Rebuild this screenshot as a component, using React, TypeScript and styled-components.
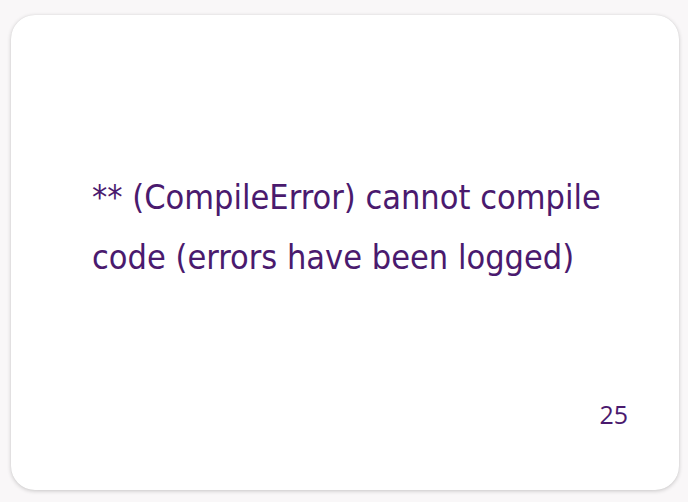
import React from "react";
import styled, { createGlobalStyle } from "styled-components";

const Global = createGlobalStyle`
  html, body { margin: 0; padding: 0; background: #f9f7f8; }
  body { width: 688px; height: 502px; overflow: hidden; }
`;

const Page = styled.div`
  box-sizing: border-box;
  width: 688px;
  height: 502px;
  padding: 15px 9px 12px 11px;
  display: flex;
`;

const Card = styled.section`
  flex: 1;
  box-sizing: border-box;
  background: #ffffff;
  border-radius: 24px;
  box-shadow: 0 1px 4px rgba(0, 0, 0, 0.2), 0 0 1px rgba(0, 0, 0, 0.08);
  display: grid;
  grid-template-rows: 1fr auto;
  padding: 0 51px 60px 81px;
`;

const Message = styled.p`
  margin: 0;
  align-self: center;
  font-family: "DejaVu Sans", "Noto Sans", sans-serif;
  font-stretch: condensed;
  font-size: 34px;
  line-height: 60px;
  color: #4a1a6e;
  padding-top: 40px;
  padding-right: 4px;
`;

const Footer = styled.div`
  justify-self: end;
  font-family: "Open Sans", "Noto Sans", sans-serif;
  font-size: 25px;
  font-weight: 500;
  line-height: 32px;
  color: #4a1a6e;
`;

export default function App() {
  return (
    <>
      <Global />
      <Page>
        <Card>
          <Message>
            ** (CompileError) cannot compile code (errors have been logged)
          </Message>
          <Footer>25</Footer>
        </Card>
      </Page>
    </>
  );
}
